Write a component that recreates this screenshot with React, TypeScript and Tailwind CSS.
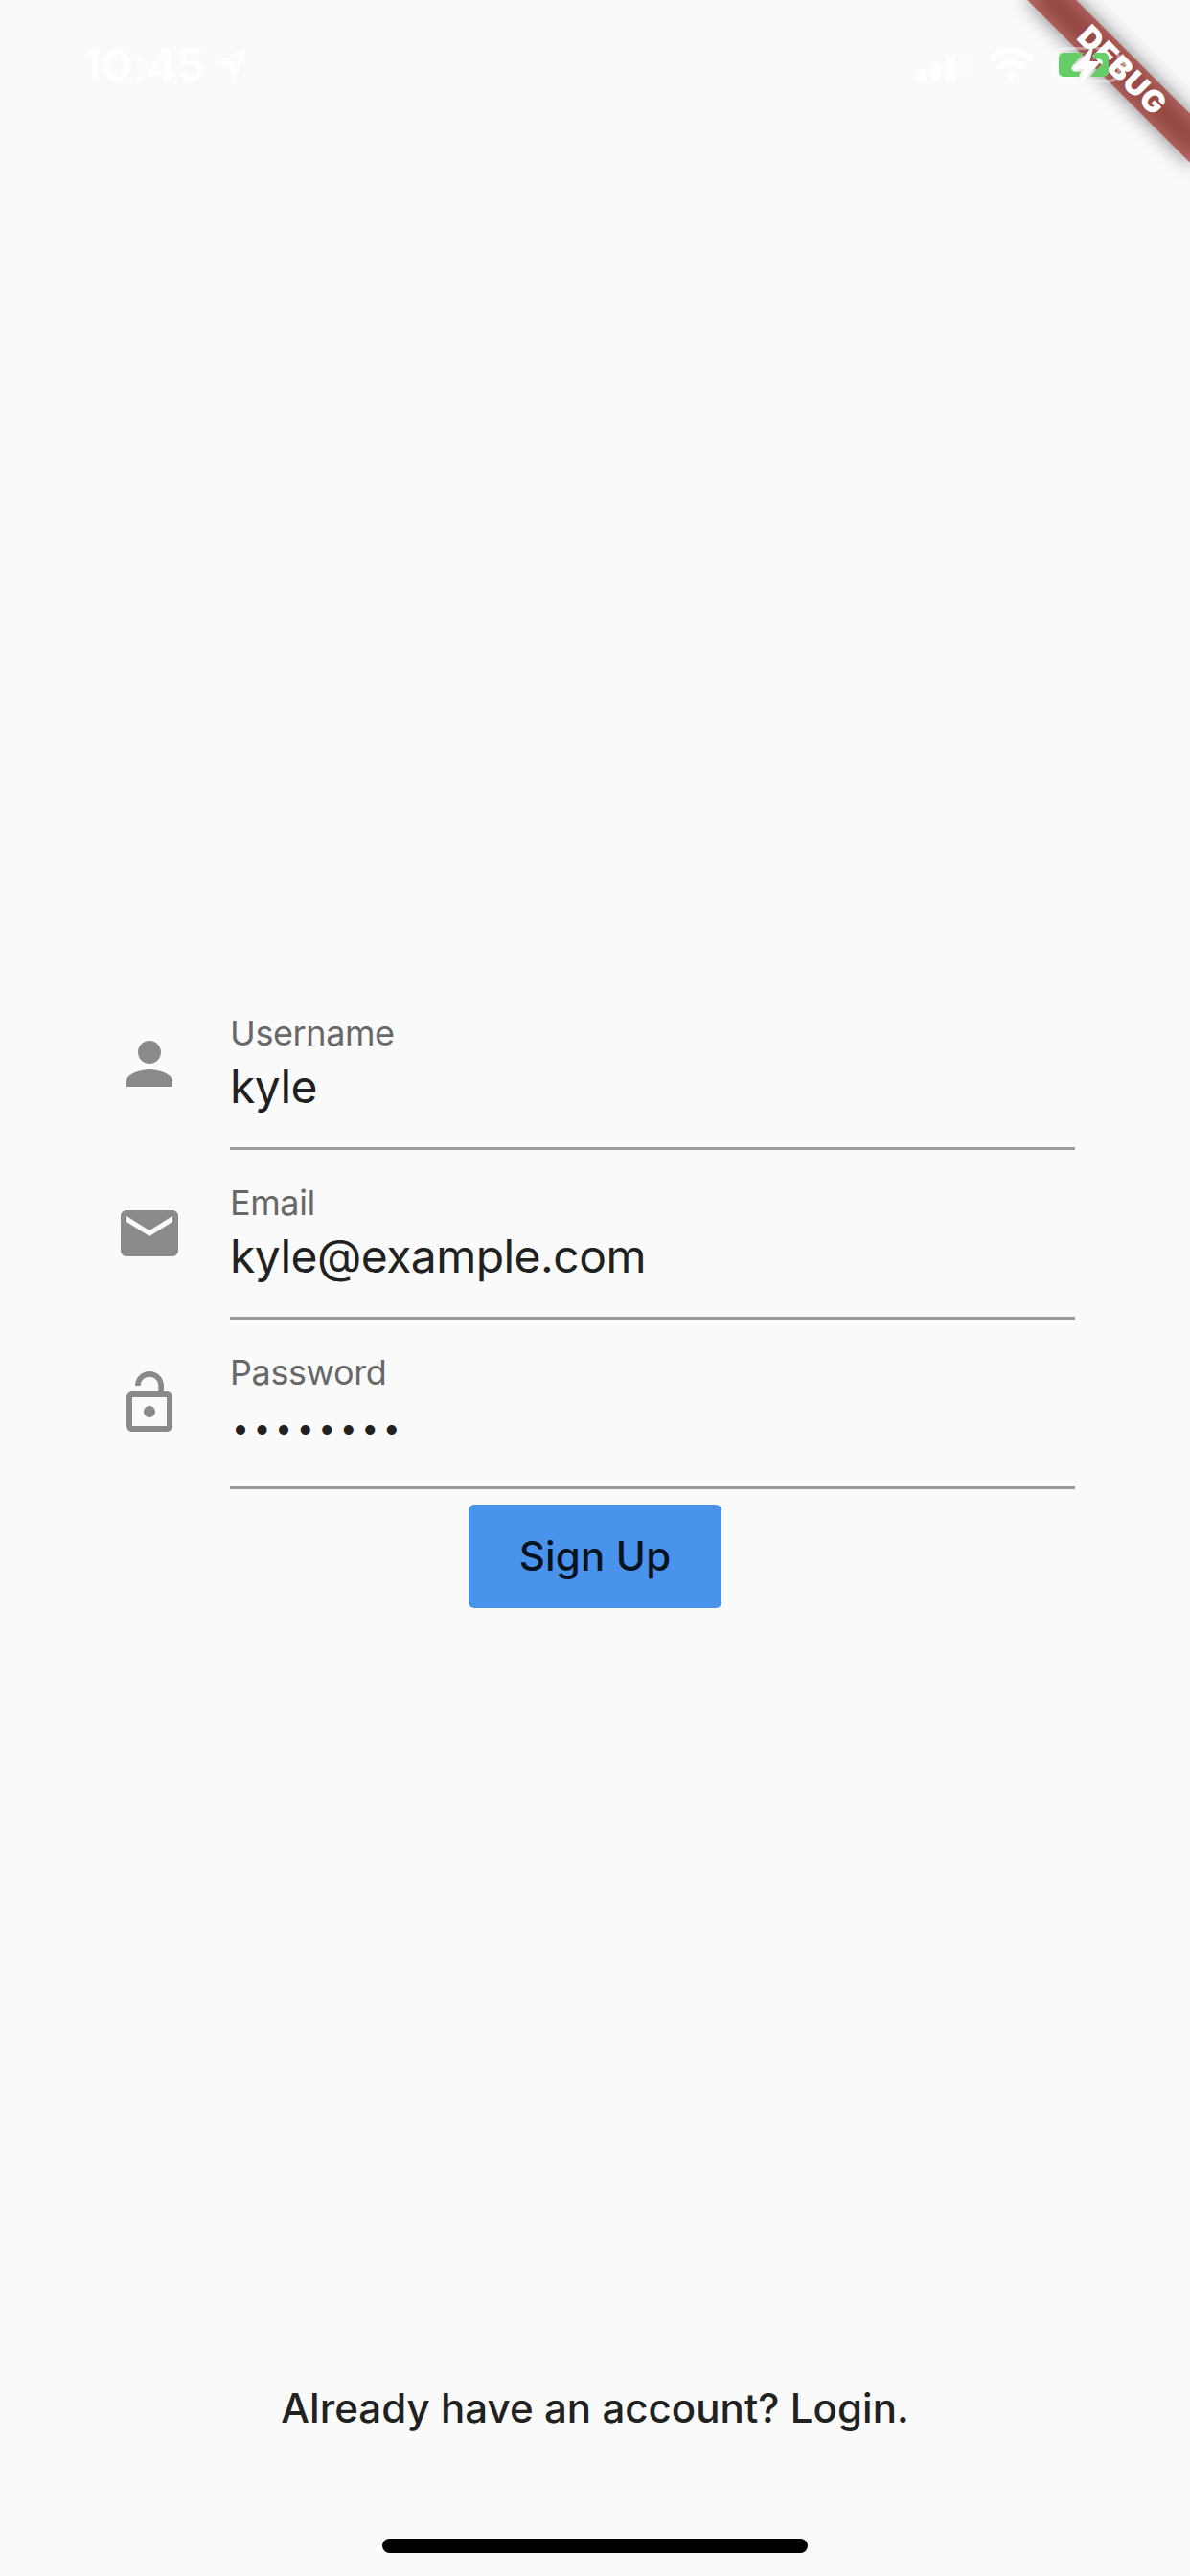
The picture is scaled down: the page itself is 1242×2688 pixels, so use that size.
import type { ReactNode } from "react";

const icons = {
  person:
    "M12 12c2.21 0 4-1.79 4-4s-1.79-4-4-4-4 1.79-4 4 1.79 4 4 4zm0 2c-2.67 0-8 1.34-8 4v2h16v-2c0-2.66-5.33-4-8-4z",
  mail: "M20 4H4c-1.1 0-1.99.9-1.99 2L2 18c0 1.1.9 2 2 2h16c1.1 0 2-.9 2-2V6c0-1.1-.9-2-2-2zm0 4l-8 5-8-5V6l8 5 8-5v2z",
  lock: "M12 17c1.1 0 2-.9 2-2s-.9-2-2-2-2 .9-2 2 .9 2 2 2zm6-9h-1V6c0-2.76-2.24-5-5-5S7 3.24 7 6h1.9c0-1.71 1.39-3.1 3.1-3.1 1.71 0 3.1 1.39 3.1 3.1v2H6c-1.1 0-2 .9-2 2v10c0 1.1.9 2 2 2h12c1.1 0 2-.9 2-2V10c0-1.1-.9-2-2-2zm0 12H6V10h12v10z",
};

function Field({ icon, label, children }: { icon: string; label: string; children: ReactNode }) {
  return (
    <div className="flex h-[177px] gap-12">
      <svg viewBox="0 0 24 24" className="mt-[51px] size-[72px] shrink-0 fill-[#8a8a8a]">
        <path d={icon} />
      </svg>
      <div className="flex flex-1 flex-col border-b-3 border-[#9b9b9b] pt-[34px]">
        <div className="text-[36px] font-[370] leading-[42px] tracking-[-0.400px] text-[#686868]">{label}</div>
        <div className="mt-1.5 text-[48px] font-[380] leading-[58px] tracking-[-0.550px] text-[#212121]">{children}</div>
      </div>
    </div>
  );
}

function StatusBar() {
  return (
    <div className="relative z-10 flex h-[132px] text-white">
      <div className="ml-[86px] mt-[39px] w-[138px] text-[47px] font-semibold leading-[58px] tracking-[0.300px]">10:45</div>
      <svg viewBox="224 48 36 38" className="mt-12 h-[38px] w-9" fill="none" stroke="white" strokeWidth="4" strokeLinejoin="round">
        <path d="M255 53L228 65L242 67L244 81Z" />
      </svg>
      <svg viewBox="950 44 232 46" className="ml-[690px] mt-11 h-[46px] w-[232px]">
        <g fill="white">
          <rect x="957" y="72" width="10" height="13" rx="3" />
          <rect x="972" y="66" width="10" height="19" rx="3" />
          <rect x="987" y="58" width="10" height="27" rx="3" />
          <rect x="1002" y="51" width="10" height="34" rx="3" opacity=".3" />
          <path d="M1055.500 85L1049 78Q1055.500 72 1062 78Z" />
        </g>
        <g fill="none" stroke="white" strokeWidth="6">
          <path d="M1034 62Q1055.500 43 1077 62" />
          <path d="M1042 71Q1055.500 59 1069 71" />
        </g>
        <mask id="bolt-gap" maskUnits="userSpaceOnUse" x="1095" y="40" width="90" height="50">
          <rect x="1095" y="40" width="90" height="50" fill="white" />
          <path d="M1140 50L1122 71H1133L1128 85L1147 65H1136Z" fill="black" stroke="black" strokeWidth="7" strokeLinejoin="round" />
        </mask>
        <g mask="url(#bolt-gap)">
          <rect x="1100.500" y="50.500" width="67" height="34" rx="10" fill="none" stroke="white" strokeWidth="3" opacity=".4" />
          <path d="M1171 61Q1176 63 1176 67.500Q1176 72 1171 74Z" fill="white" opacity=".4" />
          <rect x="1105" y="55" width="52" height="25" rx="5" fill="#65ce67" />
        </g>
        <path d="M1140 50L1122 71H1133L1128 85L1147 65H1136Z" fill="white" stroke="white" strokeWidth="2" strokeLinejoin="round" />
      </svg>
    </div>
  );
}

function DebugBanner() {
  return (
    <div className="absolute right-[-120px] top-[84px] h-9 w-60 origin-[120px_-84px] rotate-45">
      <div className="absolute inset-0 bg-black/50 blur-[10.900px]" />
      <div className="relative flex h-9 items-center justify-center bg-[#a32621a0] pl-1 text-[32px] font-black leading-9 tracking-[1px] text-white">
        DEBUG
      </div>
    </div>
  );
}

export default function App() {
  return (
    <main className="relative flex h-[2688px] w-[1242px] flex-col overflow-hidden bg-[#fafafa] font-['Inter',sans-serif]">
      <StatusBar />
      <DebugBanner />
      <form className="mt-[891px] flex flex-col px-[120px]">
        <Field icon={icons.person} label="Username">kyle</Field>
        <Field icon={icons.mail} label="Email">kyle@example.com</Field>
        <Field icon={icons.lock} label="Password">
          <span className="ml-[2px] align-[4px] text-[32px] leading-0 tracking-[4.550px]">••••••••</span>
        </Field>
        <button type="button" className="mt-4 h-[108px] w-[264px] self-center rounded-md bg-[#4a93ec] pb-0.5 text-[42px] font-[480] tracking-[0.200px] text-[#06131f]">
          Sign Up
        </button>
      </form>
      <div className="mt-auto mb-[111px] text-center text-[42px] font-[480] leading-[50px] tracking-[0.050px] text-[#212121]">
        Already have an account? Login.
      </div>
      <div className="mb-6 h-[15px] w-[444px] self-center rounded-full bg-black" />
    </main>
  );
}
